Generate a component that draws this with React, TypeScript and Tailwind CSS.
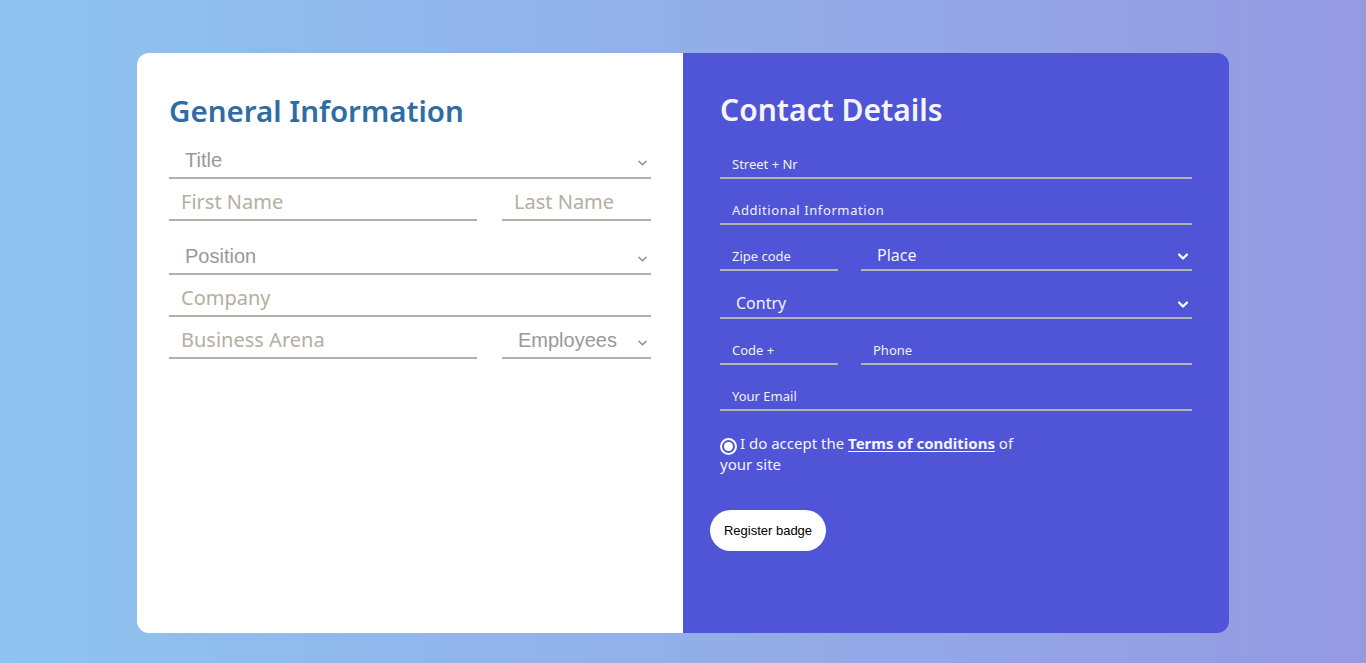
import React from "react";

function Chevron({ className }: { className?: string }) {
    return (
        <svg viewBox="0 0 10 6" className={className} fill="none" stroke="currentColor" strokeLinecap="round" strokeLinejoin="round">
            <path d="M1 1l4 4 4-4" />
        </svg>
    );
}

function LeftInput({ label, className = "" }: { label: string, className?: string }) {
    return (
        <div className={`flex items-end border-b-2 border-[#b3b1a5] h-[42px] pb-[4px] pl-[12px] ${className}`}>
            <span className="text-[20px] leading-[26px] text-[#b4aea3]">{label}</span>
        </div>
    );
}

function LeftSelect({ label, className = "" }: { label: string, className?: string }) {
    return (
        <div className={`flex items-end justify-between border-b-2 border-[#b3b1a5] pb-[4px] pl-[16px] pr-[4px] ${className}`}>
            <span className="font-['Liberation_Sans',sans-serif] text-[20px] leading-[26px] text-[#999]">{label}</span>
            <Chevron className="w-[9px] h-[6px] mb-[7px] text-[#888] stroke-[1.5]" />
        </div>
    );
}

function RightInput({ label, className = "", wide = false }: { label: string, className?: string, wide?: boolean }) {
    return (
        <div className={`flex items-end border-b-2 border-[#b4b4b4] h-[30px] pb-[4px] pl-[12px] ${className}`}>
            <span className={`text-[13px] leading-[18px] text-[#f1f0ff] ${wide ? "tracking-[0.6px]" : ""}`}>{label}</span>
        </div>
    );
}

function RightSelect({ label, className = "" }: { label: string, className?: string }) {
    return (
        <div className={`flex items-end justify-between border-b-2 border-[#b4b4b4] h-[30px] pb-[4px] pl-[16px] pr-[4px] ${className}`}>
            <span className="text-[16px] leading-[20px] text-[#f4f3ff]">{label}</span>
            <Chevron className="w-[10px] h-[7px] mb-[5px] text-white stroke-[2.2]" />
        </div>
    );
}

export default function App() {
    return (
        <div className="min-h-[663px] w-full flex justify-center bg-gradient-to-r from-[#8ec4ef] to-[#9599e2] font-['Noto_Sans',sans-serif]">
            <div className="mt-[53px] w-[1092px] h-[580px] flex rounded-[12px] overflow-hidden">
                <div className="w-[546px] bg-white px-[32px] pt-[38px]">
                    <h1 className="text-[29.5px] leading-[40px] font-semibold text-[#2e6ca6] mb-[14px]">
                        General Information
                    </h1>
                    <LeftSelect label="Title" className="h-[34px]" />
                    <div className="flex gap-[25px]">
                        <LeftInput label="First Name" className="w-[308px] h-[41px]" />
                        <LeftInput label="Last Name" className="flex-1 h-[41px]" />
                    </div>
                    <LeftSelect label="Position" className="h-[42px] mt-[12px]" />
                    <LeftInput label="Company" />
                    <div className="flex gap-[25px]">
                        <LeftInput label="Business Arena" className="w-[308px]" />
                        <LeftSelect label="Employees" className="flex-1 h-[42px]" />
                    </div>
                </div>

                <div className="w-[546px] bg-[#4f55d6] pl-[37px] pr-[37px] pt-[37px] text-white">
                    <h1 className="text-[30px] leading-[40px] font-semibold text-[#f6f4ff]">Contact Details</h1>
                    <RightInput label="Street + Nr" className="mt-[19px]" />
                    <RightInput label="Additional Information" wide className="mt-[16px]" />
                    <div className="flex gap-[23px] mt-[16px]">
                        <RightInput label="Zipe code" className="w-[118px]" />
                        <RightSelect label="Place" className="flex-1" />
                    </div>
                    <RightSelect label="Contry" className="mt-[18px]" />
                    <div className="flex gap-[23px] mt-[16px]">
                        <RightInput label="Code +" className="w-[118px]" />
                        <RightInput label="Phone" className="flex-1" />
                    </div>
                    <RightInput label="Your Email" className="mt-[16px]" />

                    <p className="mt-[23px] w-[300px] text-[15px] leading-[19px] text-[#f4f3ff]">
                        <span className="inline-flex align-[-2px] items-center justify-center w-[17px] h-[17px] rounded-full border-2 border-white mr-[3px]">
                            <span className="w-[9px] h-[9px] rounded-full bg-white" />
                        </span>
                        I do accept the <b className="font-bold underline underline-offset-2">Terms of conditions</b> of your site
                    </p>

                    <button className="mt-[36px] -ml-[10px] w-[116px] h-[41px] rounded-full bg-white text-black text-[13px] font-['Liberation_Sans',sans-serif]">
                        Register badge
                    </button>
                </div>
            </div>
        </div>
    );
}
